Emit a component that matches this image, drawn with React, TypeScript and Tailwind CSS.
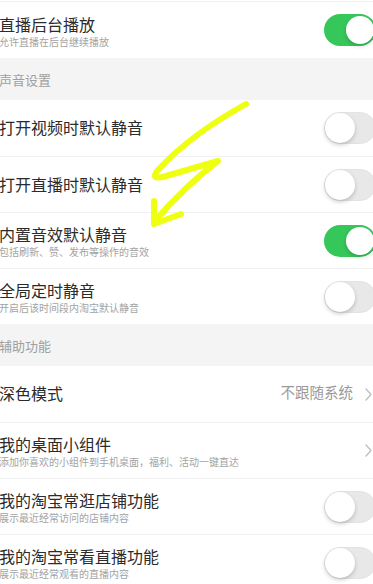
import React from "react";

const font = { fontFamily: '"Liberation Sans", "Noto Sans CJK SC", sans-serif' };

function Toggle({ on }: { on: boolean }) {
  return on ? (
    <div className="relative h-[32px] w-[52px] shrink-0 rounded-full bg-[#36c75b]">
      <div className="absolute right-[2px] top-[2px] h-[28px] w-[28px] rounded-full bg-white shadow-[0_2px_4px_rgba(0,0,0,0.18)]" />
    </div>
  ) : (
    <div className="relative h-[32px] w-[52px] shrink-0 rounded-full border border-[#e3e3e3] bg-[#e8e8e8]">
      <div className="absolute left-[0px] top-[0px] h-[30px] w-[30px] rounded-full bg-white shadow-[0_2px_4px_rgba(0,0,0,0.2)]" />
    </div>
  );
}

function Chevron() {
  return (
    <svg width="7" height="13" viewBox="0 0 7 13" className="shrink-0">
      <polyline points="1,1 6,6.5 1,12" fill="none" stroke="#bdbdbd" strokeWidth="1.3" strokeLinecap="round" strokeLinejoin="round" />
    </svg>
  );
}

function Row({
  title,
  sub,
  right,
  first,
}: {
  title: string;
  sub?: string;
  right: React.ReactNode;
  first?: boolean;
}) {
  return (
    <div
      className={
        "flex h-[56px] items-center justify-between bg-white " +
        (first ? "" : "border-t border-[#f1f1f1]")
      }
    >
      <div className={"flex flex-col " + (sub ? "mt-[5px]" : "mt-[2px]")}>
        <div className="text-[16px] leading-[20px] text-[#2b2b2b]">{title}</div>
        {sub && <div className="text-[10px] leading-[14px] text-[#a3a3a3]">{sub}</div>}
      </div>
      {right}
    </div>
  );
}

function Header({ text }: { text: string }) {
  return (
    <div className="flex h-[42px] items-center bg-[#f4f4f4] pt-[3px] text-[13px] text-[#a0a0a0]">
      {text}
    </div>
  );
}

export default function App() {
  return (
    <div className="relative h-[584px] w-[373px] overflow-hidden bg-white" style={font}>
      <div className="ml-[-1px] w-[377px]">
        <div className="h-[2px] border-b border-[#f1f1f1] bg-white" />
        <Row title="直播后台播放" sub="允许直播在后台继续播放" right={<Toggle on />} first />
        <Header text="声音设置" />
        <Row title="打开视频时默认静音" right={<Toggle on={false} />} first />
        <Row title="打开直播时默认静音" right={<Toggle on={false} />} />
        <Row title="内置音效默认静音" sub="包括刷新、赞、发布等操作的音效" right={<Toggle on />} />
        <Row title="全局定时静音" sub="开启后该时间段内淘宝默认静音" right={<Toggle on={false} />} />
        <Header text="辅助功能" />
        <Row
          title="深色模式"
          first
          right={
            <div className="mr-[4px] flex items-center gap-[12px]">
              <span className="text-[14.5px] text-[#9a9a9a]">不跟随系统</span>
              <Chevron />
            </div>
          }
        />
        <Row
          title="我的桌面小组件"
          sub="添加你喜欢的小组件到手机桌面，福利、活动一键直达"
          right={
            <div className="mr-[4px] flex items-center">
              <Chevron />
            </div>
          }
        />
        <Row title="我的淘宝常逛店铺功能" sub="展示最近经常访问的店铺内容" right={<Toggle on={false} />} />
        <Row title="我的淘宝常看直播功能" sub="展示最近经常观看的直播内容" right={<Toggle on={false} />} />
      </div>
      <svg className="pointer-events-none absolute left-0 top-0" width="373" height="584" viewBox="0 0 373 584">
        <path
          d="M246,104 Q190,135 158,170 Q149,181 166,176 L218,161 Q185,186 154,222"
          fill="none"
          stroke="#eeff10"
          strokeWidth="6"
          strokeLinecap="round"
          strokeLinejoin="round"
        />
        <path
          d="M154,201 L154,224 L181,214"
          fill="none"
          stroke="#eeff10"
          strokeWidth="6"
          strokeLinecap="round"
          strokeLinejoin="round"
        />
      </svg>
    </div>
  );
}
